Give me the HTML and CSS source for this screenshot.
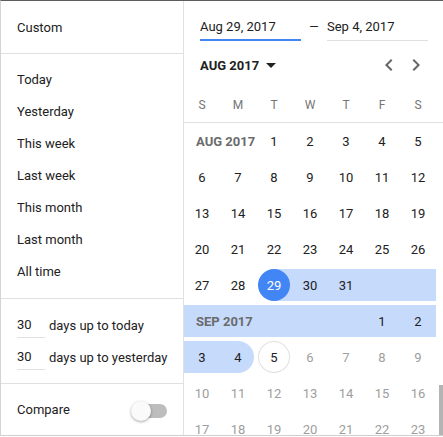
FILE: index.html
```html
<!DOCTYPE html>
<html>
<head>
<meta charset="utf-8">
<link rel="stylesheet" href="styles.css">
</head>
<body>
<div class="panel">
  <aside class="side">
    <div class="sec custom">Custom</div>
    <ul class="sec presets">
      <li>Today</li>
      <li>Yesterday</li>
      <li>This week</li>
      <li>Last week</li>
      <li>This month</li>
      <li>Last month</li>
      <li>All time</li>
    </ul>
    <div class="sec days">
      <div class="drow"><span class="num">30</span><span>days up to today</span></div>
      <div class="drow"><span class="num">30</span><span>days up to yesterday</span></div>
    </div>
    <div class="sec compare">
      <span>Compare</span>
      <span class="toggle"><span class="knob"></span></span>
    </div>
  </aside>
  <main class="cal">
    <div class="dates">
      <span class="field active">Aug 29, 2017</span>
      <span class="dash">—</span>
      <span class="field">Sep 4, 2017</span>
    </div>
    <div class="mhead">
      <span class="mlabel">AUG 2017</span>
      <svg class="ico drop" viewBox="0 0 24 24" width="24" height="24"><path d="M7 10l5 5 5-5z"/></svg>
      <span class="spacer"></span>
      <svg class="ico nav" viewBox="0 0 24 24" width="24" height="24"><path d="M15.41 7.41L14 6l-6 6 6 6 1.41-1.41L10.83 12z"/></svg>
      <svg class="ico nav" viewBox="0 0 24 24" width="24" height="24"><path d="M10 6L8.59 7.41 13.17 12l-4.58 4.59L10 18l6-6z"/></svg>
    </div>
    <div class="wdays"><span>S</span><span>M</span><span>T</span><span>W</span><span>T</span><span>F</span><span>S</span></div>
    <div class="scroll">
      <div class="grid">
        <div class="c lbl span2"><div class="b">AUG 2017</div></div>
        <div class="c"><div class="b"><span class="n">1</span></div></div>
        <div class="c"><div class="b"><span class="n">2</span></div></div>
        <div class="c"><div class="b"><span class="n">3</span></div></div>
        <div class="c"><div class="b"><span class="n">4</span></div></div>
        <div class="c"><div class="b"><span class="n">5</span></div></div>

        <div class="c"><div class="b"><span class="n">6</span></div></div>
        <div class="c"><div class="b"><span class="n">7</span></div></div>
        <div class="c"><div class="b"><span class="n">8</span></div></div>
        <div class="c"><div class="b"><span class="n">9</span></div></div>
        <div class="c"><div class="b"><span class="n">10</span></div></div>
        <div class="c"><div class="b"><span class="n">11</span></div></div>
        <div class="c"><div class="b"><span class="n">12</span></div></div>

        <div class="c"><div class="b"><span class="n">13</span></div></div>
        <div class="c"><div class="b"><span class="n">14</span></div></div>
        <div class="c"><div class="b"><span class="n">15</span></div></div>
        <div class="c"><div class="b"><span class="n">16</span></div></div>
        <div class="c"><div class="b"><span class="n">17</span></div></div>
        <div class="c"><div class="b"><span class="n">18</span></div></div>
        <div class="c"><div class="b"><span class="n">19</span></div></div>

        <div class="c"><div class="b"><span class="n">20</span></div></div>
        <div class="c"><div class="b"><span class="n">21</span></div></div>
        <div class="c"><div class="b"><span class="n">22</span></div></div>
        <div class="c"><div class="b"><span class="n">23</span></div></div>
        <div class="c"><div class="b"><span class="n">24</span></div></div>
        <div class="c"><div class="b"><span class="n">25</span></div></div>
        <div class="c"><div class="b"><span class="n">26</span></div></div>

        <div class="c"><div class="b"><span class="n">27</span></div></div>
        <div class="c"><div class="b"><span class="n">28</span></div></div>
        <div class="c"><div class="b start"><span class="n sel">29</span></div></div>
        <div class="c"><div class="b in"><span class="n">30</span></div></div>
        <div class="c"><div class="b in"><span class="n">31</span></div></div>
        <div class="c"><div class="b in"></div></div>
        <div class="c"><div class="b in"></div></div>

        <div class="c lbl span5"><div class="b in">SEP 2017</div></div>
        <div class="c"><div class="b in"><span class="n">1</span></div></div>
        <div class="c"><div class="b in"><span class="n">2</span></div></div>

        <div class="c"><div class="b in"><span class="n">3</span></div></div>
        <div class="c"><div class="b end"><span class="n">4</span></div></div>
        <div class="c"><div class="b"><span class="n today">5</span></div></div>
        <div class="c dis"><div class="b"><span class="n">6</span></div></div>
        <div class="c dis"><div class="b"><span class="n">7</span></div></div>
        <div class="c dis"><div class="b"><span class="n">8</span></div></div>
        <div class="c dis"><div class="b"><span class="n">9</span></div></div>

        <div class="c dis"><div class="b"><span class="n">10</span></div></div>
        <div class="c dis"><div class="b"><span class="n">11</span></div></div>
        <div class="c dis"><div class="b"><span class="n">12</span></div></div>
        <div class="c dis"><div class="b"><span class="n">13</span></div></div>
        <div class="c dis"><div class="b"><span class="n">14</span></div></div>
        <div class="c dis"><div class="b"><span class="n">15</span></div></div>
        <div class="c dis"><div class="b"><span class="n">16</span></div></div>

        <div class="c dis"><div class="b"><span class="n">17</span></div></div>
        <div class="c dis"><div class="b"><span class="n">18</span></div></div>
        <div class="c dis"><div class="b"><span class="n">19</span></div></div>
        <div class="c dis"><div class="b"><span class="n">20</span></div></div>
        <div class="c dis"><div class="b"><span class="n">21</span></div></div>
        <div class="c dis"><div class="b"><span class="n">22</span></div></div>
        <div class="c dis"><div class="b"><span class="n">23</span></div></div>
      </div>
    </div>
    <div class="thumb"></div>
  </main>
</div>
</body>
</html>
```

FILE: styles.css
```css
* { box-sizing: border-box; }
html, body { margin: 0; padding: 0; background: #fff; }
body {
  font-family: Roboto, "Liberation Sans", sans-serif;
  font-size: 13px;
  color: #212121;
  width: 443px;
  height: 437px;
  overflow: hidden;
}
.panel {
  display: flex;
  width: 443px;
  height: 436px;
  border-top: 1px solid #5c5c5c;
  border-bottom: 1px solid #cfcfcf;
  border-left: 1px solid #d4d4d4;
  overflow: hidden;
}
.side {
  width: 183px;
  flex: none;
  border-right: 1px solid #e0e0e0;
  display: flex;
  flex-direction: column;
}
.sec { border-bottom: 1px solid #e0e0e0; margin: 0; }
.custom {
  height: 53px;
  padding-left: 16px;
  display: flex;
  align-items: center;
  padding-top: 1px;
}
.presets {
  list-style: none;
  padding: 10px 0;
}
.presets li {
  height: 32px;
  line-height: 32px;
  padding-left: 16px;
}
.days { padding: 10px 0; }
.drow {
  height: 32px;
  display: flex;
  align-items: center;
  padding-left: 16px;
}
.num {
  width: 28px;
  line-height: 20px;
  padding-top: 3px;
  padding-bottom: 2px;
  border-bottom: 1px solid #e0e0e0;
  margin-right: 4px;
}
.compare {
  flex: 1;
  border-bottom: none;
  display: flex;
  align-items: center;
  justify-content: space-between;
  padding: 0 16px;
}
.toggle {
  position: relative;
  width: 34px;
  height: 14px;
  border-radius: 7px;
  background: #bdbdbd;
  margin-top: 2px;
}
.knob {
  position: absolute;
  left: -2px;
  top: -3px;
  width: 20px;
  height: 20px;
  border-radius: 50%;
  background: #fafafa;
  box-shadow: 0 1px 3px rgba(0,0,0,.35);
}
.cal {
  flex: 1;
  position: relative;
  display: flex;
  flex-direction: column;
  min-width: 0;
}
.dates {
  display: flex;
  align-items: flex-start;
  padding: 14px 0 0 16px;
}
.field {
  width: 101px;
  height: 26px;
  line-height: 24px;
  border-bottom: 1px solid #e0e0e0;
  padding-bottom: 1px;
}
.field.active {
  border-bottom: 2px solid #4285f4;
  padding-bottom: 0;
}
.dash {
  width: 26px;
  text-align: center;
  line-height: 24px;
  font-size: 12px;
}
.mhead {
  display: flex;
  align-items: center;
  height: 32px;
  margin-top: 8px;
  padding: 0 15px 0 16px;
}
.mlabel { font-weight: bold; }
.ico { display: block; flex: none; }
.drop { fill: #212121; }
.nav { fill: #666; }
.nav + .nav { margin-left: 3px; }
.spacer { flex: 1; }
.wdays {
  display: grid;
  grid-template-columns: repeat(7, 36px);
  height: 42px;
  padding-top: 6px;
  border-bottom: 1px solid #e0e0e0;
  flex: none;
}
.wdays span {
  text-align: center;
  line-height: 36px;
  font-size: 12px;
  color: #757575;
}
.scroll {
  flex: 1;
  overflow: hidden;
}
.grid {
  display: grid;
  grid-template-columns: repeat(7, 36px);
  grid-auto-rows: 36px;
}
.c { padding: 2px 0; }
.b {
  height: 32px;
  display: flex;
  justify-content: center;
  align-items: center;
}
.b.in { background: #c6dafc; }
.b.start { background: linear-gradient(90deg, transparent 50%, #c6dafc 50%); }
.b.end { background: linear-gradient(90deg, #c6dafc 50%, transparent 50%); }
.n {
  width: 32px;
  height: 32px;
  border-radius: 50%;
  display: flex;
  align-items: center;
  justify-content: center;
}
.end .n { background: #c6dafc; }
.n.sel { background: #4285f4; color: #fff; }
.n.today { box-shadow: inset 0 0 0 1px #e0e0e0; }
.dis { color: #9e9e9e; }
.lbl .b {
  justify-content: flex-start;
  padding-left: 12px;
  font-weight: bold;
  color: #6b6b6b;
}
.span2 { grid-column: span 2; }
.span5 { grid-column: span 5; }
.thumb {
  position: absolute;
  right: 0;
  top: 384px;
  width: 4px;
  height: 60px;
  background: #b4b4b4;
}
```
